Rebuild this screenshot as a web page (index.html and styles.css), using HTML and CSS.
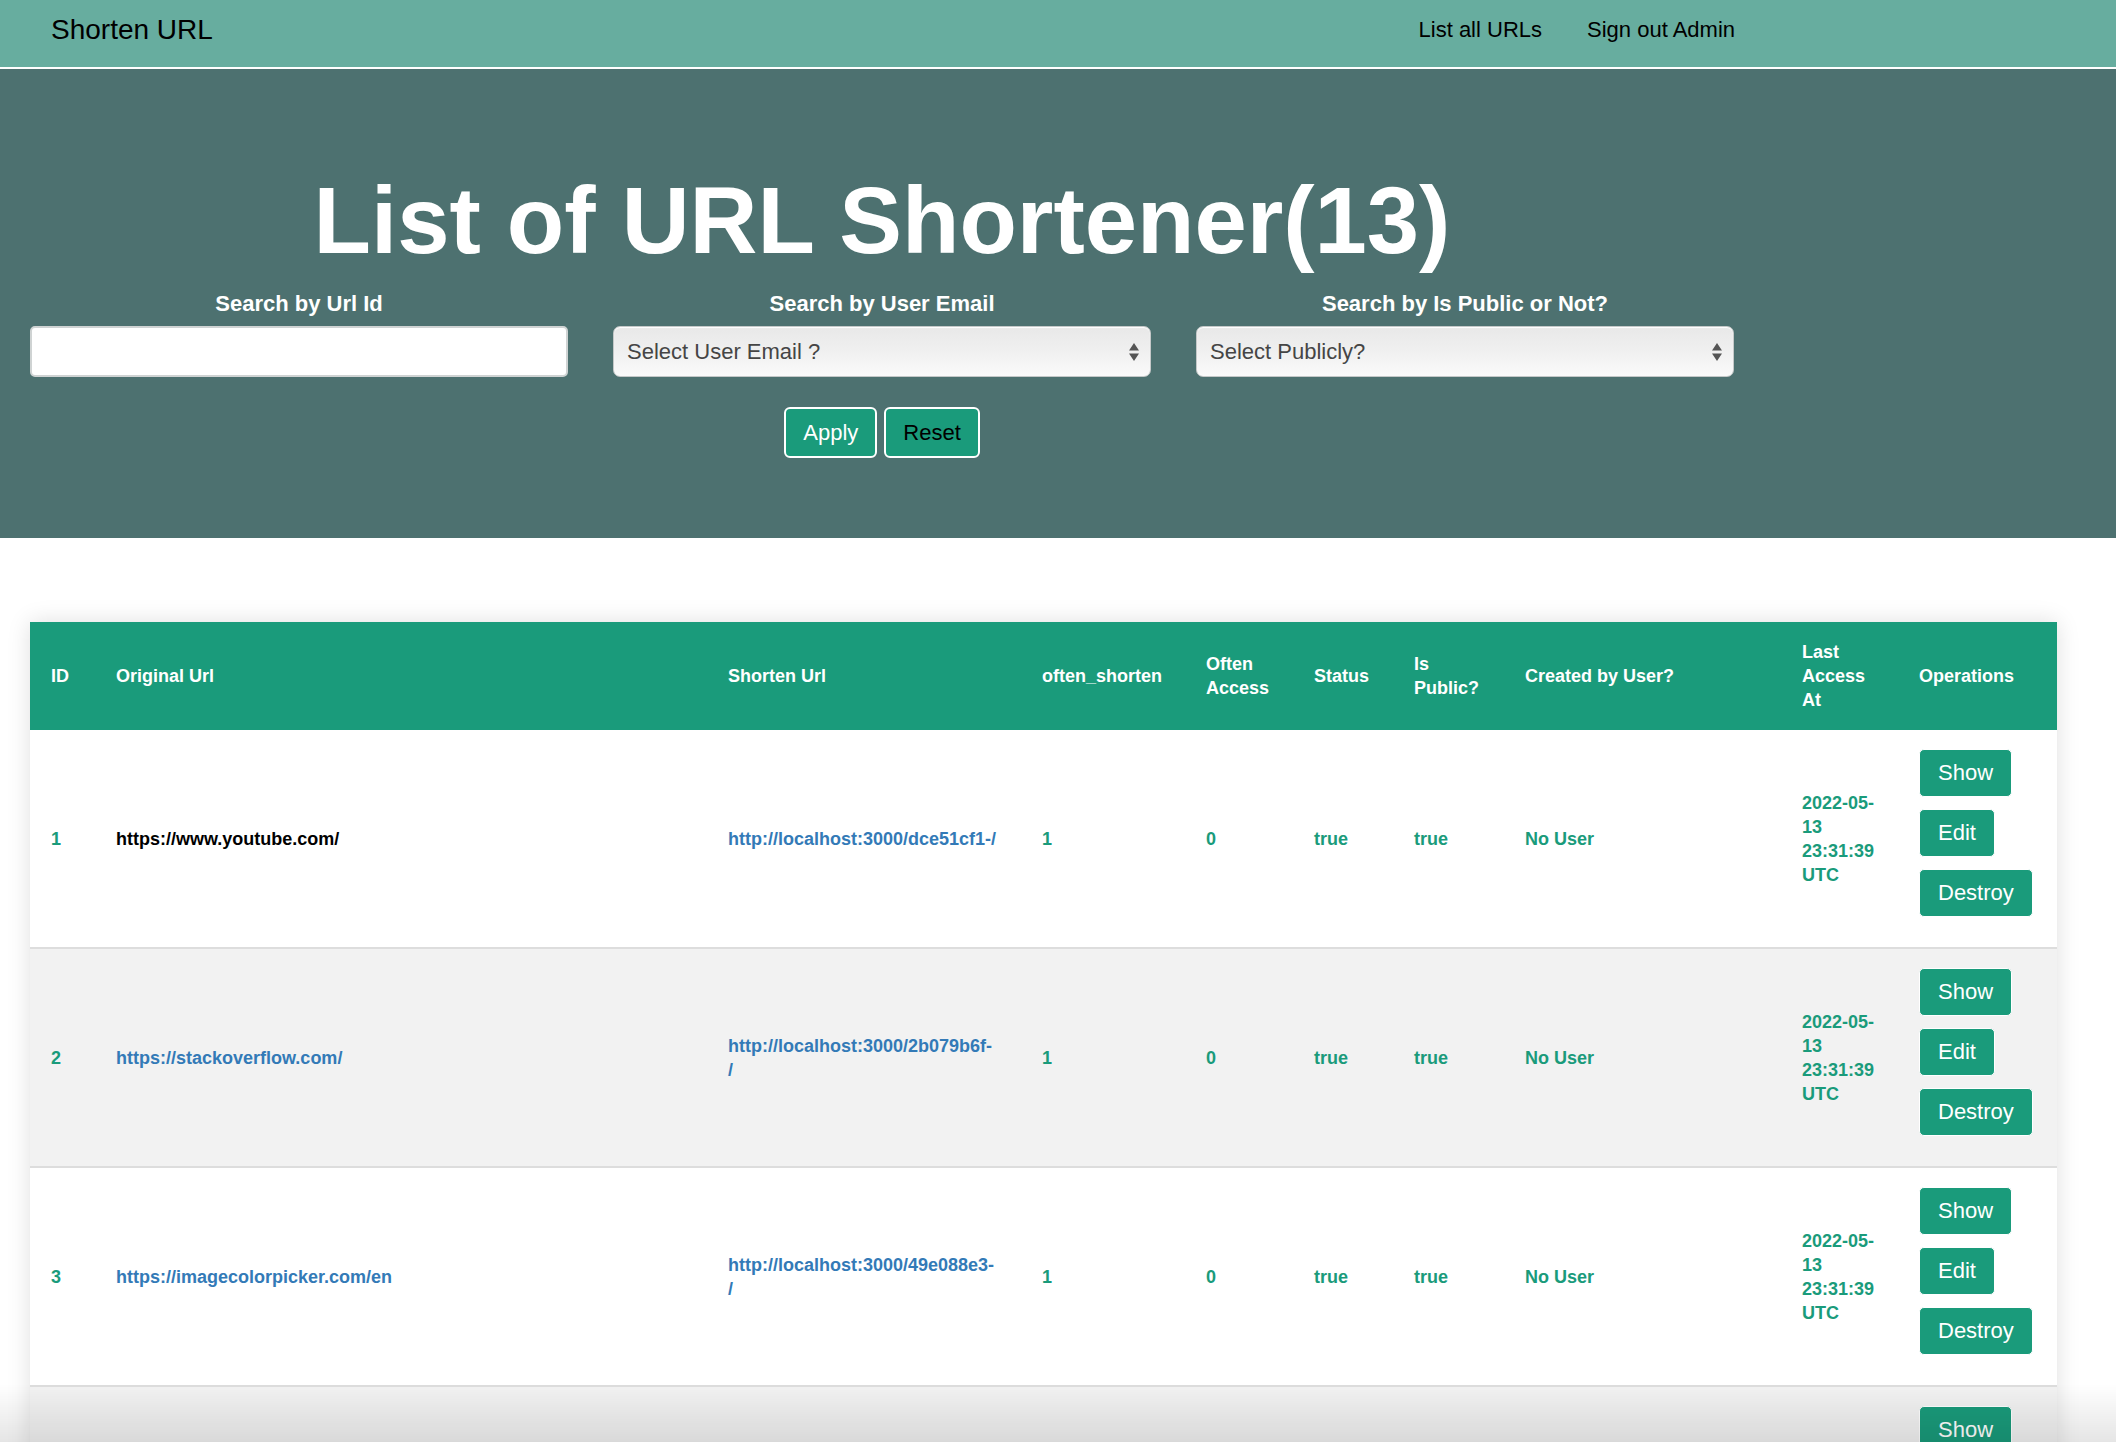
FILE: index.html
```html
<!DOCTYPE html>
<html lang="en">
<head>
<meta charset="utf-8">
<title>Shorten URL</title>
<link rel="stylesheet" href="styles.css">
</head>
<body>
<nav class="navbar">
  <a class="brand" href="#">Shorten URL</a>
  <div class="nav-links">
    <a href="#">List all URLs</a>
    <a href="#">Sign out Admin</a>
  </div>
</nav>

<section class="hero">
  <div class="container">
    <h1 class="title">List of URL Shortener(13)</h1>
    <form class="filters">
      <div class="field">
        <label>Search by Url Id</label>
        <input class="text-input" type="text">
      </div>
      <div class="field">
        <label>Search by User Email</label>
        <div class="select">
          <span>Select User Email ?</span>
          <svg class="select-arrows" width="10" height="18" viewBox="0 0 10 18"><path d="M5 0 L10 7.5 L0 7.5 Z M0 10.5 L10 10.5 L5 18 Z" fill="#555"/></svg>
        </div>
      </div>
      <div class="field">
        <label>Search by Is Public or Not?</label>
        <div class="select">
          <span>Select Publicly?</span>
          <svg class="select-arrows" width="10" height="18" viewBox="0 0 10 18"><path d="M5 0 L10 7.5 L0 7.5 Z M0 10.5 L10 10.5 L5 18 Z" fill="#555"/></svg>
        </div>
      </div>
    </form>
    <div class="actions">
      <button class="btn-outline" type="button">Apply</button>
      <button class="btn-outline dark" type="button">Reset</button>
    </div>
  </div>
</section>

<table class="urls">
  <colgroup>
    <col class="c-id"><col class="c-orig"><col class="c-short"><col class="c-often"><col class="c-access"><col class="c-status"><col class="c-public"><col class="c-created"><col class="c-last"><col class="c-ops">
  </colgroup>
  <thead>
    <tr>
      <th>ID</th>
      <th>Original Url</th>
      <th>Shorten Url</th>
      <th>often_shorten</th>
      <th>Often<br>Access</th>
      <th>Status</th>
      <th>Is<br>Public?</th>
      <th>Created by User?</th>
      <th>Last<br>Access<br>At</th>
      <th>Operations</th>
    </tr>
  </thead>
  <tbody>
    <tr>
      <td>1</td>
      <td class="plain">https://www.youtube.com/</td>
      <td class="link">http://localhost:3000/dce51cf1-/</td>
      <td>1</td>
      <td>0</td>
      <td>true</td>
      <td>true</td>
      <td>No User</td>
      <td>2022-05-<br>13<br>23:31:39<br>UTC</td>
      <td class="ops"><a class="op">Show</a><a class="op">Edit</a><a class="op">Destroy</a></td>
    </tr>
    <tr class="alt">
      <td>2</td>
      <td class="link">https://stackoverflow.com/</td>
      <td class="link">http://localhost:3000/2b079b6f-<br>/</td>
      <td>1</td>
      <td>0</td>
      <td>true</td>
      <td>true</td>
      <td>No User</td>
      <td>2022-05-<br>13<br>23:31:39<br>UTC</td>
      <td class="ops"><a class="op">Show</a><a class="op">Edit</a><a class="op">Destroy</a></td>
    </tr>
    <tr>
      <td>3</td>
      <td class="link">https://imagecolorpicker.com/en</td>
      <td class="link">http://localhost:3000/49e088e3-<br>/</td>
      <td>1</td>
      <td>0</td>
      <td>true</td>
      <td>true</td>
      <td>No User</td>
      <td>2022-05-<br>13<br>23:31:39<br>UTC</td>
      <td class="ops"><a class="op">Show</a><a class="op">Edit</a><a class="op">Destroy</a></td>
    </tr>
    <tr class="alt">
      <td>4</td>
      <td class="link">https://github.com/</td>
      <td class="link">http://localhost:3000/7a1c3d2e-<br>/</td>
      <td>1</td>
      <td>0</td>
      <td>true</td>
      <td>true</td>
      <td>No User</td>
      <td>2022-05-<br>13<br>23:31:39<br>UTC</td>
      <td class="ops"><a class="op">Show</a><a class="op">Edit</a><a class="op">Destroy</a></td>
    </tr>
  </tbody>
</table>

<div class="bottom-fade"></div>
</body>
</html>
```

FILE: styles.css
```css
html, body {
  margin: 0;
  padding: 0;
  background: #ffffff;
  font-family: "Liberation Sans", Arial, Helvetica, sans-serif;
}

a { text-decoration: none; color: inherit; }

/* Navbar */
.navbar {
  display: flex;
  align-items: center;
  justify-content: space-between;
  height: 59px;
  padding: 0 381px 8px 51px;
  background: #67ad9f;
  border-bottom: 2px solid #ffffff;
}
.brand {
  font-size: 28px;
  line-height: 28px;
  color: #000;
}
.nav-links {
  display: flex;
  gap: 45px;
}
.nav-links a {
  font-size: 22px;
  line-height: 22px;
  color: #000;
}

/* Hero */
.hero {
  background: #4d7170;
  padding: 100px 0 80px;
}
.container {
  width: 1704px;
  margin-left: 30px;
}
.title {
  margin: 0;
  text-align: center;
  color: #ffffff;
  font-size: 94px;
  line-height: 104px;
  font-weight: bold;
}
.filters {
  display: grid;
  grid-template-columns: repeat(3, 538px);
  column-gap: 45px;
  margin: 18px 0 0;
}
.field {
  display: flex;
  flex-direction: column;
  align-items: stretch;
}
.field label {
  text-align: center;
  color: #ffffff;
  font-weight: bold;
  font-size: 22px;
  line-height: 26px;
  margin-bottom: 9px;
}
.text-input {
  box-sizing: border-box;
  height: 51px;
  margin: 0;
  border: 2px solid #cfd3d3;
  border-radius: 5px;
  background: #ffffff;
  font-size: 22px;
}
.select {
  position: relative;
  box-sizing: border-box;
  height: 51px;
  display: flex;
  align-items: center;
  padding: 0 13px;
  border: 1px solid #c4c8c8;
  border-radius: 7px;
  background: linear-gradient(to bottom, #e8e8e8 0%, #f0f0f0 50%, #fafafa 100%);
  box-shadow: inset 0 1px 1px #ffffff;
  color: #454545;
  font-size: 22px;
}
.select-arrows {
  position: absolute;
  right: 11px;
  top: 16px;
}

.actions {
  display: flex;
  justify-content: center;
  gap: 7px;
  margin-top: 30px;
}
.btn-outline {
  box-sizing: border-box;
  height: 51px;
  padding: 0 17px;
  border: 2px solid #ffffff;
  border-radius: 6px;
  background: #1a9b7b;
  color: #ffffff;
  font-family: inherit;
  font-size: 22px;
}
.btn-outline.dark { color: #000000; }

/* Table */
.urls {
  margin: 84px 0 0 30px;
  width: 2027px;
  table-layout: fixed;
  border-collapse: collapse;
  box-shadow: 0 0 22px rgba(0, 0, 0, 0.13);
  background: #ffffff;
}
.c-id { width: 65px; }
.c-orig { width: 612px; }
.c-short { width: 314px; }
.c-often { width: 164px; }
.c-access { width: 108px; }
.c-status { width: 100px; }
.c-public { width: 111px; }
.c-created { width: 277px; }
.c-last { width: 117px; }
.c-ops { width: 159px; }

.urls th {
  background: #1a9b7b;
  color: #ffffff;
  font-size: 18px;
  line-height: 24px;
  font-weight: bold;
  text-align: left;
  vertical-align: middle;
  padding: 18px 0 18px 21px;
  white-space: nowrap;
}
.urls td {
  font-size: 18px;
  line-height: 24px;
  font-weight: bold;
  color: #1a9b7b;
  text-align: left;
  vertical-align: middle;
  padding: 19px 0 18px 21px;
  white-space: nowrap;
  border-bottom: 2px solid #dddddd;
}
.urls tr.alt td { background: #f2f2f2; }
.urls td.plain { color: #000000; }
.urls td.link { color: #337ab7; }

.ops .op {
  display: block;
  width: fit-content;
  box-sizing: border-box;
  height: 48px;
  line-height: 46px;
  padding: 0 18px;
  margin-bottom: 12px;
  border: 1px solid #ffffff;
  border-radius: 5px;
  background: #1a9b7b;
  color: #ffffff;
  font-size: 22px;
  font-weight: normal;
}

.bottom-fade {
  position: fixed;
  left: 0;
  right: 0;
  bottom: 0;
  height: 58px;
  pointer-events: none;
  background: linear-gradient(to bottom, rgba(0,0,0,0) 0%, rgba(0,0,0,0.1) 100%);
}
```
